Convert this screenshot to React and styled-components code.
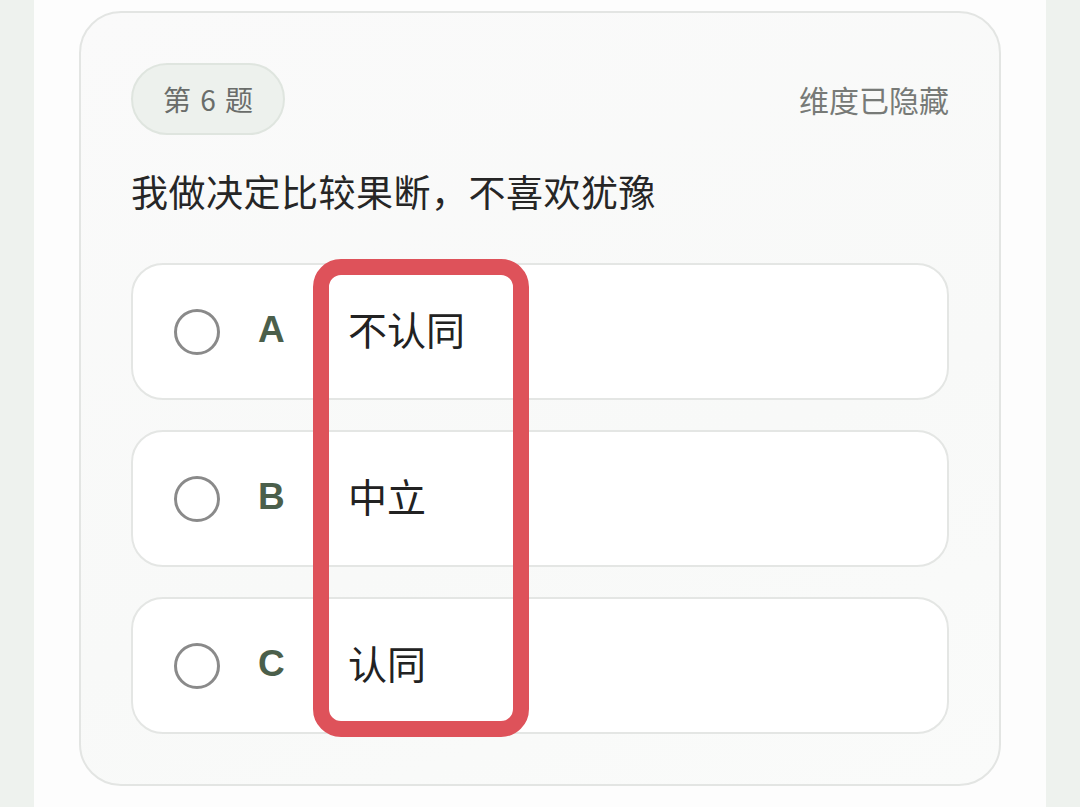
import React from 'react'
import styled, { createGlobalStyle } from 'styled-components'

const GlobalStyle = createGlobalStyle`
  html, body {
    margin: 0;
    padding: 0;
    background: #eef2ee;
    font-family: "Noto Sans CJK SC", "Noto Sans", sans-serif;
  }
`

export const Page = styled.div`
  width: 1012px;
  min-height: 807px;
  margin-left: 34px;
  background: #fdfdfd;
  padding: 11px 0 0 45px;
  box-sizing: border-box;
`

export const Card = styled.div`
  position: relative;
  width: 922px;
  height: 775px;
  box-sizing: border-box;
  padding: 49px 50px 0 50px;
  border: 2px solid #e3e5e3;
  border-radius: 42px;
  background: linear-gradient(160deg, #fafafa 0%, #f8f9f8 60%, #fafbfa 100%);
  display: flex;
  flex-direction: column;
`

export const Header = styled.div`
  display: flex;
  align-items: center;
  justify-content: space-between;
  height: 74px;
  flex-shrink: 0;
`

export const Badge = styled.div`
  display: flex;
  align-items: center;
  justify-content: center;
  width: 154px;
  height: 72px;
  box-sizing: border-box;
  border-radius: 36px;
  background: #edf1ed;
  border: 2px solid #dfe5df;
  color: #6a6d6a;
  font-size: 28px;
  word-spacing: 3px;
`

export const Hidden = styled.div`
  color: #777a77;
  font-size: 30px;
`

export const Question = styled.div`
  margin-top: 32px;
  font-size: 37px;
  line-height: 46px;
  letter-spacing: 0.5px;
  color: #262626;
  flex-shrink: 0;
`

export const Options = styled.div`
  margin-top: 49px;
  display: flex;
  flex-direction: column;
  gap: 30px;
  flex-shrink: 0;
`

export const Option = styled.div`
  display: flex;
  align-items: center;
  height: 137px;
  flex-shrink: 0;
  box-sizing: border-box;
  border: 2px solid #e4e6e4;
  border-radius: 32px;
  background: #ffffff;
  padding-left: 41px;
`

export const Radio = styled.span`
  width: 46px;
  height: 46px;
  box-sizing: border-box;
  border: 3px solid #8a8a8a;
  border-radius: 50%;
`

export const Letter = styled.span`
  width: 90px;
  margin-left: 38px;
  margin-bottom: 4px;
  font-family: "Liberation Sans", Arial, sans-serif;
  font-weight: 700;
  font-size: 37px;
  color: #4b5f4b;
`

export const Label = styled.span`
  font-size: 39px;
  line-height: 1;
  margin-bottom: 6px;
  color: #222;
`

export const Highlight = styled.div`
  position: absolute;
  left: 232px;
  top: 246px;
  width: 216px;
  height: 478px;
  box-sizing: border-box;
  border: 16px solid #de525a;
  border-radius: 28px;
  pointer-events: none;
`

const options = [
  { key: 'A', text: '不认同' },
  { key: 'B', text: '中立' },
  { key: 'C', text: '认同' },
]

export default function App() {
  return (
    <>
      <GlobalStyle />
      <Page>
        <Card>
          <Header>
            <Badge>第 6 题</Badge>
            <Hidden>维度已隐藏</Hidden>
          </Header>
          <Question>我做决定比较果断，不喜欢犹豫</Question>
          <Options>
            {options.map(o => (
              <Option key={o.key}>
                <Radio />
                <Letter>{o.key}</Letter>
                <Label>{o.text}</Label>
              </Option>
            ))}
          </Options>
          <Highlight />
        </Card>
      </Page>
    </>
  )
}
